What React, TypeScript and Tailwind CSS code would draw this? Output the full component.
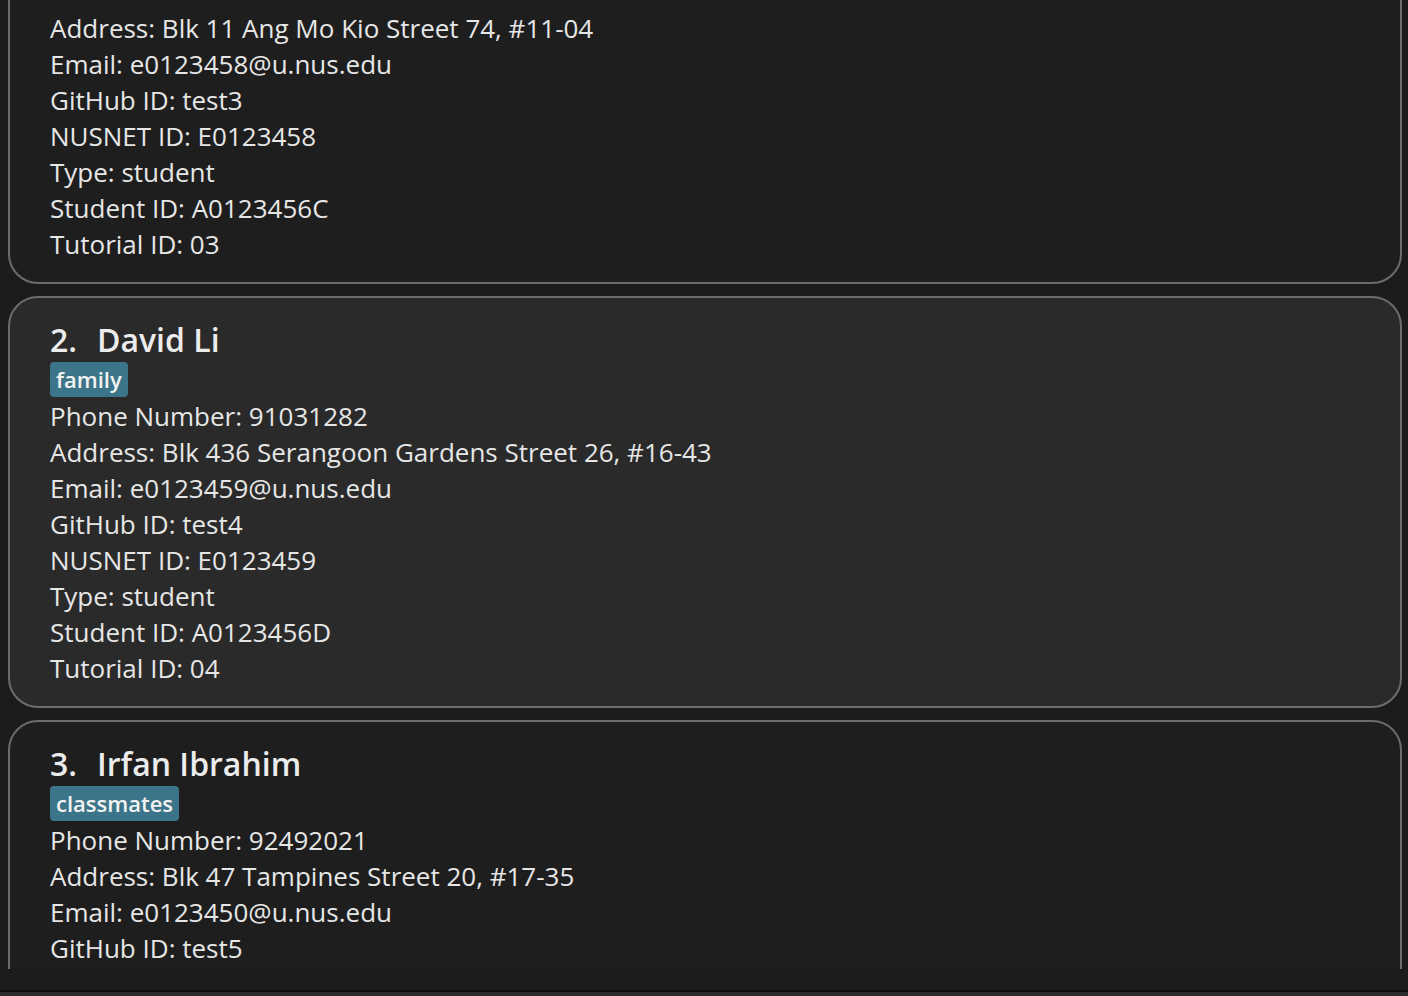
import React from 'react'

interface Person {
    index: number;
    name: string;
    tags: string[];
    phone: string;
    address: string;
    email: string;
    github: string;
    nusnet: string;
    type: string;
    studentId: string;
    tutorialId: string;
}

const people: Person[] = [
    {
        index: 1,
        name: 'Charlotte Oliveiro',
        tags: ['neighbours'],
        phone: '93210283',
        address: 'Blk 11 Ang Mo Kio Street 74, #11-04',
        email: 'e0123458@u.nus.edu',
        github: 'test3',
        nusnet: 'E0123458',
        type: 'student',
        studentId: 'A0123456C',
        tutorialId: '03',
    },
    {
        index: 2,
        name: 'David Li',
        tags: ['family'],
        phone: '91031282',
        address: 'Blk 436 Serangoon Gardens Street 26, #16-43',
        email: 'e0123459@u.nus.edu',
        github: 'test4',
        nusnet: 'E0123459',
        type: 'student',
        studentId: 'A0123456D',
        tutorialId: '04',
    },
    {
        index: 3,
        name: 'Irfan Ibrahim',
        tags: ['classmates'],
        phone: '92492021',
        address: 'Blk 47 Tampines Street 20, #17-35',
        email: 'e0123450@u.nus.edu',
        github: 'test5',
        nusnet: 'E0123450',
        type: 'student',
        studentId: 'A0123456E',
        tutorialId: '05',
    },
]

// scrolledPast: the card is partly scrolled out of view, only the lower rows show
const PersonCard = ({ person, selected, scrolledPast }: { person: Person; selected: boolean; scrolledPast?: boolean }) => {
    const rows = [
        `Phone Number: ${person.phone}`,
        `Address: ${person.address}`,
        `Email: ${person.email}`,
        `GitHub ID: ${person.github}`,
        `NUSNET ID: ${person.nusnet}`,
        `Type: ${person.type}`,
        `Student ID: ${person.studentId}`,
        `Tutorial ID: ${person.tutorialId}`,
    ]
    const shownRows = scrolledPast ? rows.slice(1) : rows

    return (
        <div
            className={`rounded-[30px] border-2 border-[#6c6c6c] pl-[40px] pr-6 pb-[20px] ${scrolledPast ? 'pt-[68px] -mt-[60px]' : 'pt-[23px]'} ${selected ? 'bg-[#2a2a2a]' : 'bg-[#1e1e1e]'}`}
        >
            {!scrolledPast && (
                <>
                    <div className="flex text-[32px] leading-[38px] font-semibold text-[#ececec]">
                        <span className="w-[47px]">{person.index}.</span>
                        <span>{person.name}</span>
                    </div>
                    <div className="flex gap-2 mt-[3px] mb-[1px]">
                        {person.tags.map((tag) => (
                            <span
                                key={tag}
                                className="bg-[#3c7589] text-[#f2f2f2] rounded-[4px] px-[6px] h-[35px] leading-[35px] text-[22px] font-semibold"
                            >
                                {tag}
                            </span>
                        ))}
                    </div>
                </>
            )}
            <div className="text-[26px] leading-[36px] text-[#e6e6e6]">
                {shownRows.map((row) => (
                    <div key={row}>{row}</div>
                ))}
            </div>
        </div>
    )
}

const App = () => {
    return (
        <div
            className="w-[1408px] h-[996px] bg-[#1c1c1c] flex flex-col overflow-hidden"
            style={{ fontFamily: '"Open Sans", "Noto Sans", sans-serif' }}
        >
            <div className="h-[969px] overflow-hidden pl-[8px] pr-[6px]">
                <div className="flex flex-col gap-[12px]">
                    {people.map((p) => (
                        <PersonCard key={p.index} person={p} selected={p.index === 2} scrolledPast={p.index === 1} />
                    ))}
                </div>
            </div>
            <div className="h-[21px] bg-[#1c1c1c]" />
            <div className="h-[2px] bg-[#0f0f0f]" />
            <div className="flex-1 bg-[#2b2b2b]" />
        </div>
    )
}

export default App
